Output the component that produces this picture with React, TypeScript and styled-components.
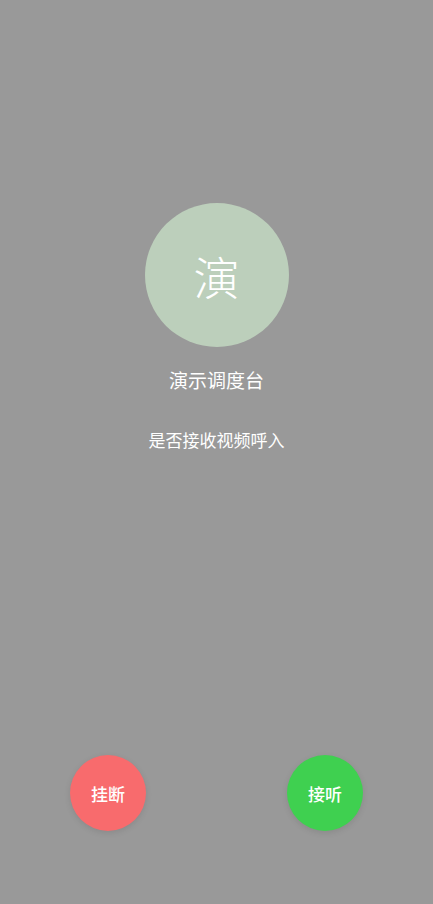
import styled, { createGlobalStyle } from 'styled-components'

const GlobalStyle = createGlobalStyle`
    html, body {
        margin: 0;
        padding: 0;
        background: #999999;
    }
    body {
        font-family: "Noto Sans CJK SC", "Noto Sans", sans-serif;
    }
`

const ScreenDiv = styled.div`
    display: flex;
    flex-direction: column;
    align-items: center;
    width: 100%;
    height: 904px;
    padding-top: 203px;
    padding-bottom: 73px;
    box-sizing: border-box;
    background: #999999;
    color: #ffffff;
`

const AvatarDiv = styled.div`
    display: flex;
    align-items: center;
    justify-content: center;
    width: 144px;
    height: 144px;
    border-radius: 50%;
    background: #bccfbb;
    font-size: 46px;
    font-weight: 300;
    line-height: 1;
`

const NameText = styled.div`
    margin-top: 20px;
    font-size: 19px;
    line-height: 26px;
`

const HintText = styled.div`
    margin-top: 35px;
    font-size: 17px;
    line-height: 24px;
`

const Spacer = styled.div`
    flex-grow: 1;
`

const ActionsRow = styled.div`
    display: flex;
    justify-content: space-between;
    width: 100%;
    padding: 0 70px;
    box-sizing: border-box;
`

const RoundButton = styled.button<{ $color: string }>`
    display: flex;
    align-items: center;
    justify-content: center;
    width: 76px;
    height: 76px;
    padding: 0;
    border: none;
    border-radius: 50%;
    background: ${(p) => p.$color};
    box-shadow: 0 2px 6px rgba(0, 0, 0, 0.1);
    color: #ffffff;
    font-family: "Noto Sans CJK SC", "Noto Sans", sans-serif;
    font-size: 17px;
    font-weight: 500;
    cursor: pointer;
`

export default function App() {
    return (
        <>
            <GlobalStyle />
            <ScreenDiv>
                <AvatarDiv>演</AvatarDiv>
                <NameText>演示调度台</NameText>
                <HintText>是否接收视频呼入</HintText>
                <Spacer />
                <ActionsRow>
                    <RoundButton $color="#f86b6d">挂断</RoundButton>
                    <RoundButton $color="#3fd050">接听</RoundButton>
                </ActionsRow>
            </ScreenDiv>
        </>
    )
}
